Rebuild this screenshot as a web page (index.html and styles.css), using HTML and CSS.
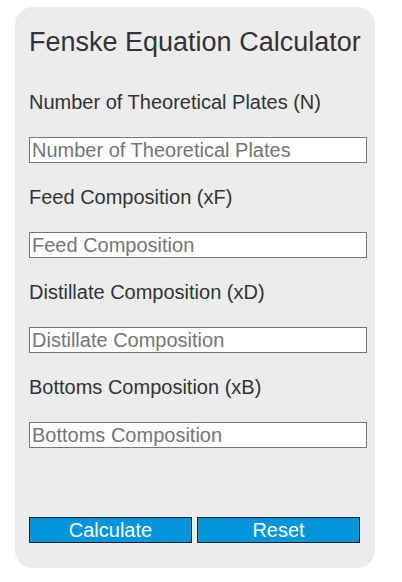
FILE: index.html
```html
<!DOCTYPE html>
<html>
<head>
<meta charset="utf-8">
<link rel="stylesheet" href="styles.css">
</head>
<body>
<div class="calc">
  <h1 class="title">Fenske Equation Calculator</h1>
  <div class="field">
    <label class="label">Number of Theoretical Plates (N)</label>
    <input class="input" type="text" placeholder="Number of Theoretical Plates">
  </div>
  <div class="field">
    <label class="label">Feed Composition (xF)</label>
    <input class="input" type="text" placeholder="Feed Composition">
  </div>
  <div class="field">
    <label class="label">Distillate Composition (xD)</label>
    <input class="input" type="text" placeholder="Distillate Composition">
  </div>
  <div class="field">
    <label class="label">Bottoms Composition (xB)</label>
    <input class="input" type="text" placeholder="Bottoms Composition">
  </div>
  <div class="buttons">
    <button class="btn">Calculate</button>
    <button class="btn">Reset</button>
  </div>
</div>
</body>
</html>
```
FILE: styles.css
```css
html, body {
  margin: 0;
  padding: 0;
  background: #ffffff;
}
body {
  font-family: "Liberation Sans", Arial, sans-serif;
  color: #333333;
}
.calc {
  box-sizing: border-box;
  margin: 7px 0 0 15px;
  width: 360px;
  height: 561px;
  background: #ececec;
  border-radius: 18px;
  padding: 20px 8px 0 14px;
  display: flex;
  flex-direction: column;
}
.title {
  margin: 0;
  font-size: 27px;
  font-weight: normal;
  line-height: 31px;
  color: #333333;
}
.field {
  display: flex;
  flex-direction: column;
  margin-top: 23px;
}
.field:first-of-type {
  margin-top: 33px;
}
.label {
  font-size: 20px;
  line-height: 23px;
  color: #333333;
}
.input {
  box-sizing: border-box;
  margin-top: 23px;
  width: 338px;
  height: 26px;
  border: 1px solid #767676;
  background: #ffffff;
  padding: 0 2px;
  font-family: "Liberation Sans", Arial, sans-serif;
  font-size: 20px;
  color: #333333;
  outline: none;
}
.input::placeholder {
  color: #757575;
  opacity: 1;
}
.buttons {
  display: flex;
  gap: 5px;
  margin-top: 69px;
}
.btn {
  box-sizing: border-box;
  width: 163px;
  height: 26px;
  padding: 0;
  border: 1px solid #222222;
  background: #0095dd;
  color: #ffffff;
  font-family: "Liberation Sans", Arial, sans-serif;
  font-size: 20px;
  line-height: 24px;
}
```
